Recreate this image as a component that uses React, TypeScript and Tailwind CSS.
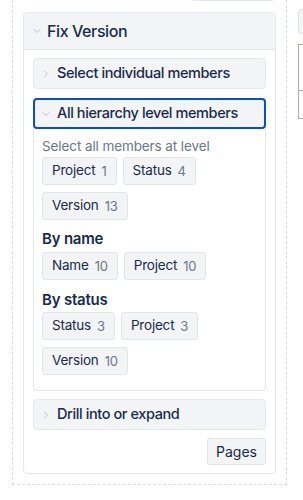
import { ChevronDown, ChevronRight } from 'lucide-react';

interface Chip {
  label: string;
  count: number;
}

const levelChips: Chip[] = [
  { label: 'Project', count: 1 },
  { label: 'Status', count: 4 },
  { label: 'Version', count: 13 },
];

const nameChips: Chip[] = [
  { label: 'Name', count: 10 },
  { label: 'Project', count: 10 },
];

const statusChips: Chip[] = [
  { label: 'Status', count: 3 },
  { label: 'Project', count: 3 },
  { label: 'Version', count: 10 },
];

function ChipRow({ chips }: { chips: Chip[] }) {
  return (
    <div className="flex flex-wrap gap-x-[6px] gap-y-[7px]">
      {chips.map((c, i) => (
        <button
          key={i}
          className="flex h-[28px] items-center gap-[6px] rounded-[3px] border border-[#e3e5e9] bg-[#f3f4f6] px-[9px] text-[13.5px] leading-none tracking-[-0.2px] text-[#172b4d]"
        >
          <span>{c.label}</span>
          <span className="text-[13px] text-[#6b778c]">{c.count}</span>
        </button>
      ))}
    </div>
  );
}

function Section({ title, open }: { title: string; open?: boolean }) {
  return (
    <div
      className={
        open
          ? 'flex h-[31px] items-center gap-[5px] rounded-[4px] border-2 border-[#0b4fc4] bg-[#f3f4f6] pl-[5px]'
          : 'flex h-[31px] items-center gap-[5px] rounded-[4px] border border-[#e6e8ec] bg-[#f3f4f6] pl-[6px]'
      }
    >
      {open ? (
        <ChevronDown className="h-[12px] w-[12px] text-[#a5adba]" strokeWidth={1.5} />
      ) : (
        <ChevronRight className="h-[12px] w-[12px] text-[#a5adba]" strokeWidth={1.5} />
      )}
      <span className="text-[14.5px] font-medium leading-none tracking-[-0.4px] text-[#172b4d]">{title}</span>
    </div>
  );
}

export default function App() {
  return (
    <div className="flex h-[500px] w-[303px] overflow-hidden bg-white font-['Inter',sans-serif]">
      {/* dashed column */}
      <div className="ml-[12px] flex h-[485px] w-[275px] shrink-0 flex-col border-x border-b border-dashed border-[#d9dce1] px-[10px] pb-[10px]">
        <div className="ml-auto mr-[3px] h-px w-[80px] bg-[#e5e7eb]" />
        <div className="mt-[11px] rounded-[4px] border border-[#e6e8ec] bg-white">
          <div className="flex h-[37px] items-center gap-[4px] rounded-t-[4px] border-b border-[#e6e8ec] bg-[#f3f4f6] pl-[7px]">
            <ChevronDown className="h-[12px] w-[12px] text-[#a5adba]" strokeWidth={1.5} />
            <span className="text-[16px] font-medium leading-none tracking-[-0.4px] text-[#172b4d]">Fix Version</span>
          </div>

          <div className="flex flex-col px-[9px] pt-[8px] pb-[8px]">
            <Section title="Select individual members" />

            <div className="mt-[9px]">
              <Section title="All hierarchy level members" open />
              <div className="rounded-b-[4px] border-x border-b border-[#e6e8ec] px-[8px] pt-[8px] pb-[15px]">
                <p className="text-[13.5px] leading-[18px] tracking-[-0.1px] text-[#6b778c]">
                  Select all members at level
                </p>
                <div className="mt-[2px]">
                  <ChipRow chips={levelChips} />
                </div>

                <p className="mt-[9px] text-[15px] font-semibold leading-[20px] tracking-[-0.2px] text-[#172b4d]">
                  By name
                </p>
                <div className="mt-[3px]">
                  <ChipRow chips={nameChips} />
                </div>

                <p className="mt-[10px] text-[15px] font-semibold leading-[20px] tracking-[-0.2px] text-[#172b4d]">
                  By status
                </p>
                <div className="mt-[2px]">
                  <ChipRow chips={statusChips} />
                </div>
              </div>
            </div>

            <div className="mt-[8px]">
              <Section title="Drill into or expand" />
            </div>

            <div className="mt-[8px] flex justify-end">
              <button className="h-[27px] w-[59px] rounded-[3px] border border-[#e3e5e9] bg-[#f3f4f6] text-[14px] leading-none text-[#172b4d]">
                Pages
              </button>
            </div>
          </div>
        </div>
      </div>

      {/* neighbouring column, clipped */}
      <div className="ml-[11px] flex shrink-0 flex-col pt-[9px]">
        <div className="h-[25px] w-[40px] rounded-[4px] border border-[#dfe1e6] bg-[#f4f5f7]" />
        <div className="mt-[10px] w-[40px] border border-[#a9adb8]">
          <div className="h-[46px] border-b border-[#a9adb8]" />
          <div className="h-[27px]" />
        </div>
      </div>
    </div>
  );
}
